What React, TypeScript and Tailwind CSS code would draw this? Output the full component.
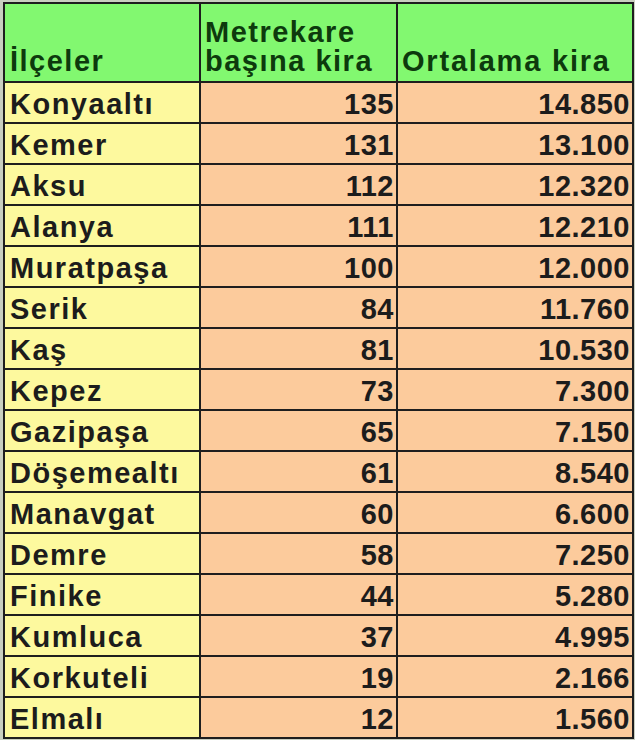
import { Fragment } from "react"

const rows: [string, string, string][] = [
  ["Konyaaltı", "135", "14.850"],
  ["Kemer", "131", "13.100"],
  ["Aksu", "112", "12.320"],
  ["Alanya", "111", "12.210"],
  ["Muratpaşa", "100", "12.000"],
  ["Serik", "84", "11.760"],
  ["Kaş", "81", "10.530"],
  ["Kepez", "73", "7.300"],
  ["Gazipaşa", "65", "7.150"],
  ["Döşemealtı", "61", "8.540"],
  ["Manavgat", "60", "6.600"],
  ["Demre", "58", "7.250"],
  ["Finike", "44", "5.280"],
  ["Kumluca", "37", "4.995"],
  ["Korkuteli", "19", "2.166"],
  ["Elmalı", "12", "1.560"],
]

export default function App() {
  return (
    <div className="w-[635px] h-[740px] overflow-hidden bg-[#c9cfc0] pt-[2px] pl-[3px] font-['Liberation_Sans',Arial,sans-serif] font-bold text-[29px]">
      <div className="w-[631px] border-2 border-[#1e1e1e] bg-[#1e1e1e] grid grid-cols-[194px_195px_234px] gap-[2px]">
        {/* header */}
        <div className="h-[77px] bg-[#82f870] text-[#0d3a0d] flex items-end px-[5px] pb-[5px] leading-[29px] tracking-[1.5px]">
          İlçeler
        </div>
        <div className="h-[77px] bg-[#82f870] text-[#0d3a0d] flex items-end px-[4px] pb-[5px] leading-[29px] tracking-[1.5px]">
          Metrekare
          <br />
          başına kira
        </div>
        <div className="h-[77px] bg-[#82f870] text-[#0d3a0d] flex items-end px-[4px] pb-[5px] leading-[29px] tracking-[1.8px]">
          Ortalama kira
        </div>

        {rows.map(([name, m2, avg]) => (
          <Fragment key={name}>
            <div className="h-[39px] bg-[#fdf99e] text-[#1c1c1c] flex items-end pl-[5px] pb-[3px] leading-[30px] tracking-[1.5px]">
              {name}
            </div>
            <div className="h-[39px] bg-[#fccb9c] text-[#1c1c1c] flex items-end justify-end pr-[2px] pb-[3px] leading-[30px] tracking-[0.5px]">
              {m2}
            </div>
            <div className="h-[39px] bg-[#fccb9c] text-[#1c1c1c] flex items-end justify-end pr-[2px] pb-[3px] leading-[30px] tracking-[0.5px]">
              {avg}
            </div>
          </Fragment>
        ))}
      </div>
    </div>
  )
}
